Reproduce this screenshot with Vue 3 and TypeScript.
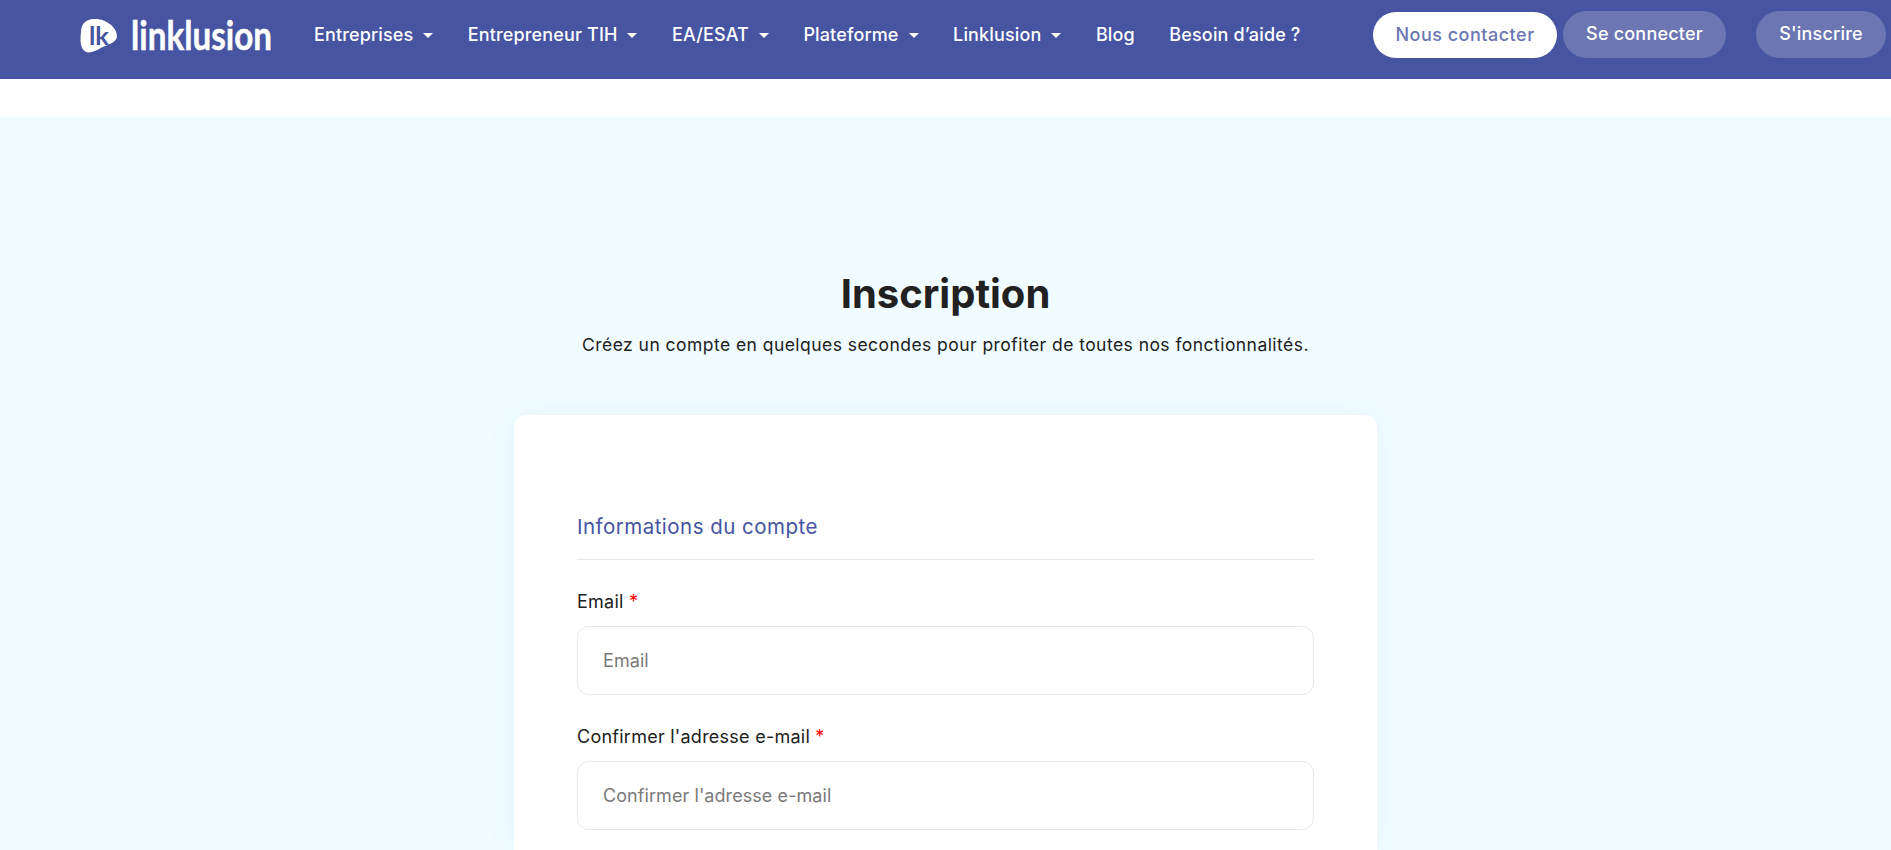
<script setup lang="ts">
const menus: { label: string; caret: boolean }[] = [
  { label: 'Entreprises', caret: true },
  { label: 'Entrepreneur TIH', caret: true },
  { label: 'EA/ESAT', caret: true },
  { label: 'Plateforme', caret: true },
  { label: 'Linklusion', caret: true },
  { label: 'Blog', caret: false },
  { label: 'Besoin d’aide ?', caret: false },
]
</script>

<template>
  <div class="page">
    <header class="topbar">
      <a class="logo" aria-label="Linklusion">
        <svg width="194" height="40" viewBox="0 0 194 40">
          <path d="M14 1 C6 1 1 6 1 14 C0 22 0 31 6 34 C12 36 18 31 25 28 C31 26 37 23 37 18 C37 9 25 0 14 1 Z" fill="#fff" />
          <text x="9" y="26.5" textLength="20" lengthAdjust="spacingAndGlyphs" class="logo-mark">lk</text>
          <text x="51" y="31.5" textLength="141" lengthAdjust="spacingAndGlyphs" class="logo-word">linklusion</text>
        </svg>
      </a>
      <nav class="menu">
        <a v-for="item in menus" :key="item.label" class="menu-link">
          {{ item.label }}<span v-if="item.caret" class="caret"></span>
        </a>
      </nav>
      <div class="actions">
        <a class="btn btn-light">Nous contacter</a>
        <a class="btn btn-soft btn-login">Se connecter</a>
        <a class="btn btn-soft btn-signup">S'inscrire</a>
      </div>
    </header>

    <main class="content">
      <section class="hero">
        <h1>Inscription</h1>
        <p>Créez un compte en quelques secondes pour profiter de toutes nos fonctionnalités.</p>
      </section>

      <form class="card">
        <h2>Informations du compte</h2>
        <div class="field">
          <label>Email <span class="req">*</span></label>
          <input type="text" placeholder="Email" />
        </div>
        <div class="field">
          <label>Confirmer l'adresse e-mail <span class="req">*</span></label>
          <input type="text" placeholder="Confirmer l'adresse e-mail" />
        </div>
      </form>
    </main>
  </div>
</template>

<style>
html, body { margin: 0; background: #fff; overflow: hidden; }
</style>

<style scoped>
.page {
  width: 1891px;
  height: 850px;
  overflow: hidden;
  font-family: "Inter", "Noto Sans", sans-serif;
  background: #fff;
  color: #1f1f1f;
}
.topbar {
  height: 79px;
  background: #4654a2;
  display: flex;
  align-items: center;
  padding: 0 0 9px 80px;
  box-sizing: border-box;
  color: #fff;
}
.logo { display: block; width: 192px; height: 40px; flex: none; margin-top: 6px; }
.logo svg { display: block; overflow: visible; }
.logo-mark {
  font-family: "Lato", sans-serif;
  font-weight: 700;
  font-size: 25px;
  fill: #4654a2;
}
.logo-word {
  font-family: "Lato", sans-serif;
  font-weight: 700;
  font-size: 41px;
  fill: #fff;
  stroke: #fff;
  stroke-width: 0.5px;
}
.menu {
  display: flex;
  align-items: center;
  gap: 34.5px;
  margin-left: 42px;
}
.menu-link {
  font-size: 18px;
  font-weight: 500;
  letter-spacing: 0.14px;
  line-height: 24px;
  white-space: nowrap;
  display: flex;
  align-items: center;
}
.caret {
  display: inline-block;
  margin-left: 10px;
  border-top: 5px solid #fff;
  border-left: 5px solid transparent;
  border-right: 5px solid transparent;
}
.actions {
  margin-left: auto;
  margin-right: 5px;
  margin-top: -1px;
  display: flex;
  align-items: flex-end;
  height: 47px;
}
.btn {
  display: flex;
  align-items: center;
  justify-content: center;
  box-sizing: border-box;
  border-radius: 24px;
  font-size: 18px;
  font-weight: 500;
  white-space: nowrap;
  letter-spacing: 0.2px;
  padding-bottom: 2px;
}
.btn-light {
  width: 184px;
  height: 46px;
  background: #fff;
  color: #6b76b3;
  letter-spacing: 0.5px;
}
.btn-soft {
  height: 47px;
  background: #6b76b3;
  color: #fff;
}
.btn-login { width: 163px; margin-left: 6px; }
.btn-signup { width: 130px; margin-left: 30px; }

.content {
  margin-top: 38px;
  height: 733px;
  background: #f0fcff;
  display: flex;
  flex-direction: column;
  align-items: center;
}
.hero { text-align: center; padding-top: 152px; }
.hero h1 {
  margin: 0;
  font-size: 40px;
  line-height: 50px;
  font-weight: 700;
  color: #212121;
}
.hero p {
  margin: 13px 0 0;
  font-size: 17.5px;
  letter-spacing: 0.45px;
  line-height: 26px;
  color: #212121;
}
.card {
  margin-top: 57px;
  width: 863px;
  flex: 1;
  box-sizing: border-box;
  background: #fff;
  border-radius: 12px 12px 0 0;
  padding: 96px 63px 0;
  box-shadow: 0 0 30px rgba(70, 140, 220, 0.07);
}
.card h2 {
  margin: 0;
  font-size: 20.5px;
  letter-spacing: 0.47px;
  line-height: 32px;
  font-weight: 400;
  color: #4654a2;
  padding-bottom: 16px;
  border-bottom: 1px solid #e8e8e8;
}
.field { margin-top: 29px; display: flex; flex-direction: column; }
.field + .field { margin-top: 29px; }
.field label {
  font-size: 18px;
  letter-spacing: 0.25px;
  line-height: 24px;
  font-weight: 400;
  color: #212121;
  margin-bottom: 12px;
  padding-top: 1px;
}
.req { color: #ff0000; }
.field input {
  height: 69px;
  box-sizing: border-box;
  border: 1px solid #e8e8e8;
  border-radius: 12px;
  padding: 0 25px;
  font: inherit;
  font-size: 18px;
  letter-spacing: 0.07px;
  outline: none;
  background: #fff;
}
.field input::placeholder { color: #7a7a7a; opacity: 1; }
</style>
